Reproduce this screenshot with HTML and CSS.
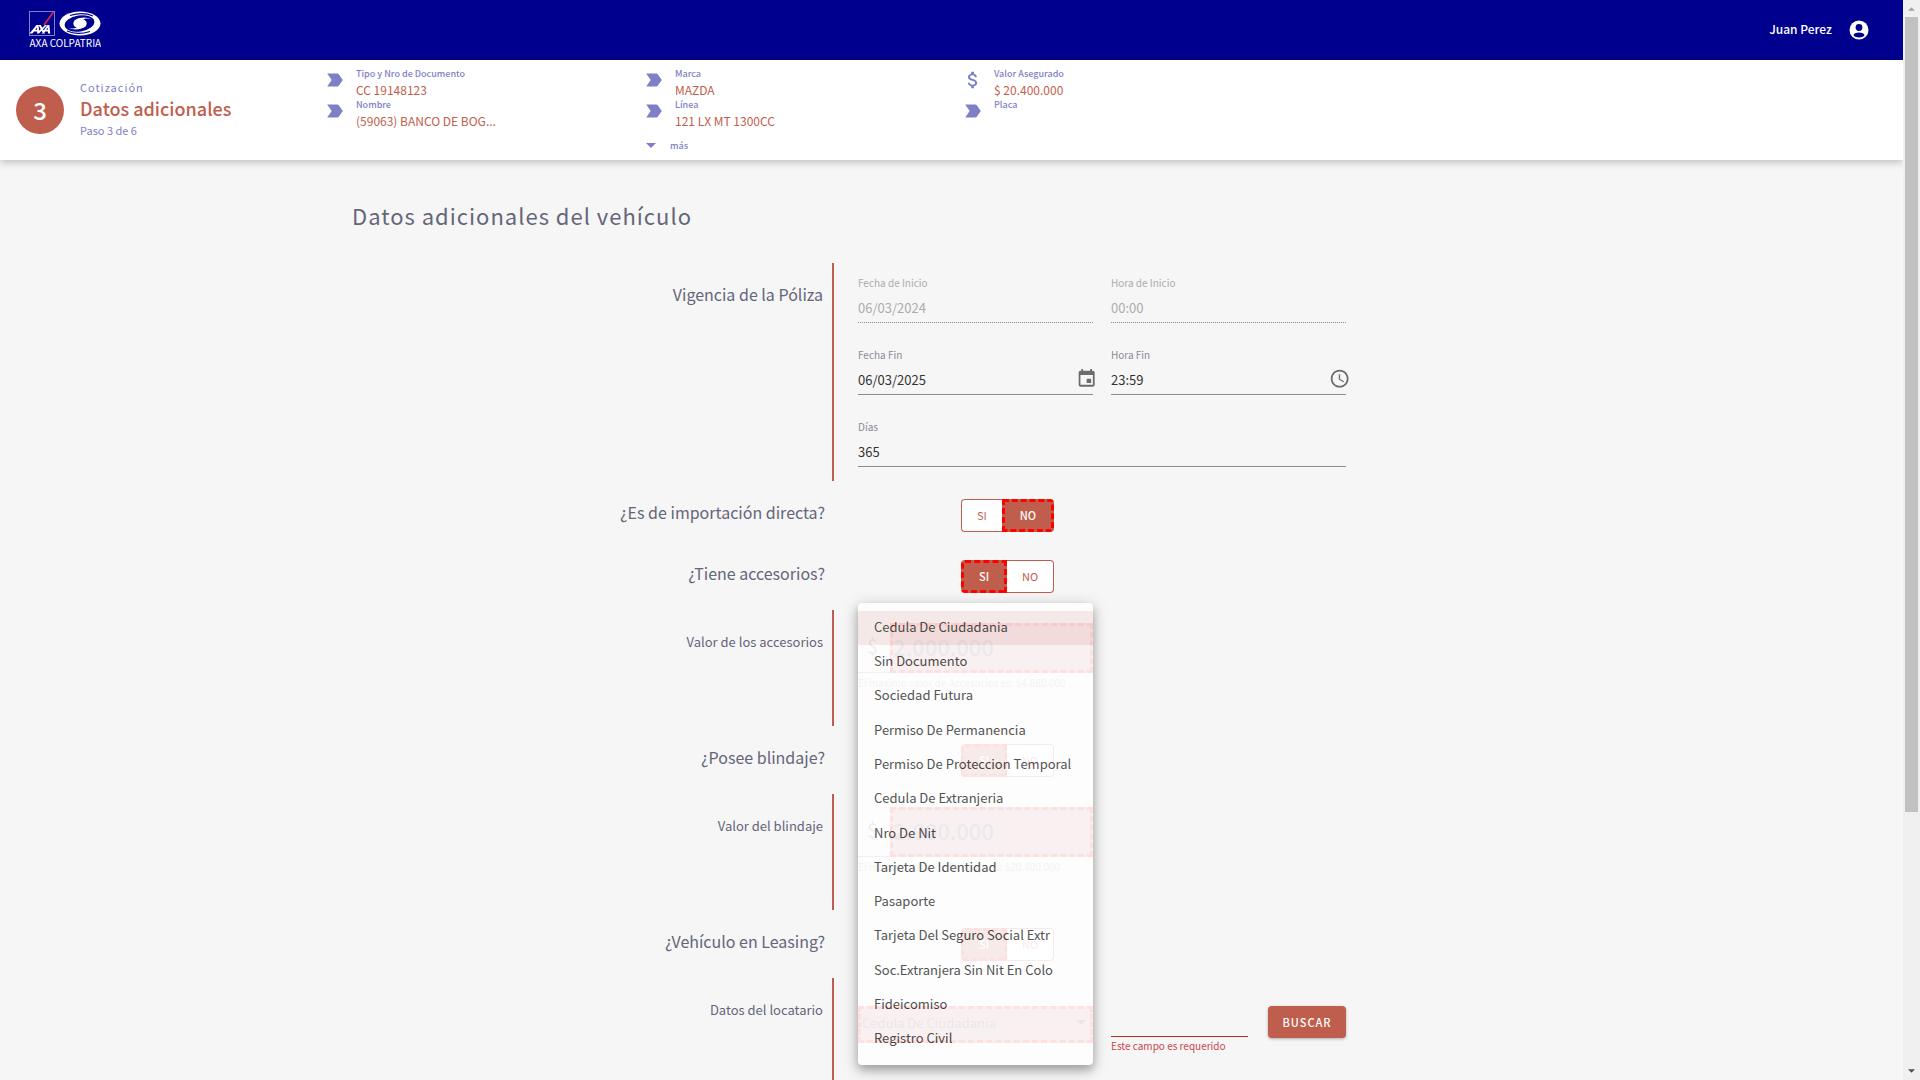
FILE: index.html
```html
<!DOCTYPE html>
<html lang="es">
<head>
<meta charset="utf-8">
<title>Datos adicionales - AXA Colpatria</title>
<link rel="stylesheet" href="styles.css">
</head>
<body>
<svg class="defs" aria-hidden="true">
  <symbol id="tag" viewBox="0 0 24 24"><path d="M3.5 19h11c.67 0 1.27-.33 1.63-.84L20.5 12l-4.37-6.16c-.36-.51-.96-.84-1.63-.84h-11l4.84 7z"/></symbol>
  <symbol id="money" viewBox="0 0 24 24"><path d="M11.8 10.9c-2.27-.59-3-1.2-3-2.15 0-1.09 1.01-1.85 2.7-1.85 1.78 0 2.44.85 2.5 2.1h2.21c-.07-1.72-1.12-3.3-3.21-3.81V3h-3v2.16c-1.94.42-3.5 1.68-3.5 3.61 0 2.31 1.91 3.46 4.7 4.13 2.5.6 3 1.48 3 2.41 0 .69-.49 1.79-2.7 1.79-2.06 0-2.87-.92-2.98-2.1h-2.2c.12 2.19 1.76 3.42 3.68 3.83V21h3v-2.15c1.95-.37 3.5-1.5 3.5-3.55 0-2.84-2.43-3.81-4.7-4.4z"/></symbol>
  <symbol id="caret" viewBox="0 0 10 5"><path d="M0 0h10L5 5z"/></symbol>
</svg>
<div class="shell">
  <div class="page">
    <header class="topbar">
      <a class="logo" href="#" aria-label="AXA Colpatria">
        <svg width="72" height="38" viewBox="0 0 72 38">
          <rect x="0.5" y="0.5" width="25" height="24" fill="none" stroke="#7f7fc7"/>
          <path d="M24.5 1L15 14" stroke="#e0244e" stroke-width="1.6"/>
          <path d="M.5 22.500L7.500 14h2l1 8.500H8.300l-.2-2H5l-1.600 2zM6.300 18.800h1.700l-.2-2.300zM9.500 14h2.300l1.500 2.700 2.700-2.700h2l-3.900 4.300 2.100 4.200h-2.300l-1.300-2.700-2.600 2.700H7.700l4-4.400zM12.500 22.500l6-8.500h1.800l1 8.500h-2.200l-.2-2h-2.700l-1.400 2zM17.300 18.800h1.500l-.2-2.300z" fill="#fff"/>
          <ellipse cx="51" cy="12.500" rx="20.500" ry="12" fill="#fff"/>
          <ellipse cx="50.500" cy="12.500" rx="15" ry="8" fill="#00008f" transform="rotate(-9 50.500 12.500)"/>
          <path d="M41 4.500Q54 .5 64 5" fill="none" stroke="#00008f" stroke-width="1.300"/>
          <path d="M61 20.500Q48 24.500 38 20" fill="none" stroke="#00008f" stroke-width="1.300"/>
          <path d="M45 10Q53 4 64 8.500Q57 6.500 53 9zM57 15Q49 21 38 16.500Q45 18.500 49 16z" fill="#fff"/>
          <ellipse cx="51" cy="12.500" rx="6.700" ry="5" fill="#fff"/>
          <text x="0.5" y="36" class="logo-name">AXA COLPATRIA</text>
        </svg>
      </a>
      <button class="user" type="button"><span>Juan Perez</span>
        <svg width="24" height="24" viewBox="0 0 24 24"><circle cx="12" cy="12" r="9.500" fill="#fff"/><circle cx="12" cy="9.500" r="3.400" fill="#00008f"/><ellipse cx="12" cy="17" rx="5.400" ry="2.500" fill="#00008f"/></svg>
      </button>
    </header>

    <section class="summary">
      <div class="step">
        <span class="step-number">3</span>
        <div>
          <p class="step-over">Cotización</p>
          <h1 class="step-title">Datos adicionales</h1>
          <p class="step-count">Paso 3 de 6</p>
        </div>
      </div>
      <dl class="facts">
        <div class="fact"><svg><use href="#tag"/></svg><dt>Tipo y Nro de Documento</dt><dd>CC 19148123</dd></div>
        <div class="fact"><svg><use href="#tag"/></svg><dt>Nombre</dt><dd>(59063) BANCO DE BOG...</dd></div>
      </dl>
      <div>
        <dl class="facts">
          <div class="fact"><svg><use href="#tag"/></svg><dt>Marca</dt><dd>MAZDA</dd></div>
          <div class="fact"><svg><use href="#tag"/></svg><dt>Línea</dt><dd>121 LX MT 1300CC</dd></div>
        </dl>
        <button class="more" type="button"><svg><use href="#caret"/></svg>más</button>
      </div>
      <dl class="facts">
        <div class="fact"><svg><use href="#money"/></svg><dt>Valor Asegurado</dt><dd>$ 20.400.000</dd></div>
        <div class="fact"><svg><use href="#tag"/></svg><dt>Placa</dt><dd></dd></div>
      </dl>
    </section>

    <main class="content">
      <h2 class="title">Datos adicionales del vehículo</h2>
      <form>
        <div class="row policy">
          <h3 class="row-label ruled">Vigencia de la Póliza</h3>
          <div class="fields">
            <div class="field disabled"><label for="f1">Fecha de Inicio</label><div class="control"><input id="f1" value="06/03/2024" disabled></div></div>
            <div class="field disabled"><label for="h1">Hora de Inicio</label><div class="control"><input id="h1" value="00:00" disabled></div></div>
            <div class="field"><label for="f2">Fecha Fin</label><div class="control"><input id="f2" value="06/03/2025"><button type="button" class="picker" aria-label="Elegir fecha"><svg viewBox="0 0 24 24"><path d="M17 12h-5v5h5v-5zM16 1v2H8V1H6v2H5c-1.110 0-1.990.9-1.990 2L3 19c0 1.100.89 2 2 2h14c1.100 0 2-.9 2-2V5c0-1.100-.9-2-2-2h-1V1h-2zm3 18H5V8h14v11z"/></svg></button></div></div>
            <div class="field"><label for="h2">Hora Fin</label><div class="control"><input id="h2" value="23:59"><button type="button" class="picker" aria-label="Elegir hora"><svg viewBox="0 0 24 24"><path d="M11.990 2C6.470 2 2 6.480 2 12s4.470 10 9.990 10C17.520 22 22 17.520 22 12S17.520 2 11.990 2zM12 20c-4.420 0-8-3.580-8-8s3.580-8 8-8 8 3.580 8 8-3.580 8-8 8zm.5-13H11v6l5.250 3.150.75-1.230-4.500-2.670z"/></svg></button></div></div>
            <div class="field wide"><label for="d">Días</label><div class="control"><input id="d" value="365"></div></div>
          </div>
        </div>

        <div class="row question">
          <h3 class="row-label">¿Es de importación directa?</h3>
          <div class="toggle"><button type="button" aria-pressed="false">SI</button><button type="button" aria-pressed="true">NO</button></div>
        </div>
        <div class="row question">
          <h3 class="row-label">¿Tiene accesorios?</h3>
          <div class="toggle"><button type="button" aria-pressed="true">SI</button><button type="button" aria-pressed="false">NO</button></div>
        </div>
        <div class="row amount">
          <label class="row-label ruled small" for="acc">Valor de los accesorios</label>
          <div class="money">
            <div class="money-box"><span>$</span><input id="acc" value="2.000.000"></div>
            <p class="hint">El maximo valor de Accesorios es: $4.080.000</p>
          </div>
        </div>
        <div class="row question">
          <h3 class="row-label">¿Posee blindaje?</h3>
          <div class="toggle"><button type="button" aria-pressed="true">SI</button><button type="button" aria-pressed="false">NO</button></div>
        </div>
        <div class="row amount">
          <label class="row-label ruled small" for="bli">Valor del blindaje</label>
          <div class="money">
            <div class="money-box"><span>$</span><input id="bli" value="2.000.000"></div>
            <p class="hint">El maximo valor de Blindaje es: $20.400.000</p>
          </div>
        </div>
        <div class="row question">
          <h3 class="row-label">¿Vehículo en Leasing?</h3>
          <div class="toggle"><button type="button" aria-pressed="true">SI</button><button type="button" aria-pressed="false">NO</button></div>
        </div>
        <div class="row lessee">
          <h3 class="row-label ruled small">Datos del locatario</h3>
          <div class="lookup">
            <div class="doc-type">
              <button class="select" type="button" role="combobox" aria-expanded="true" aria-controls="doc-menu" aria-label="Tipo de documento">Cedula De Ciudadania<svg><use href="#caret"/></svg></button>
              <ul class="menu" id="doc-menu" role="listbox">
                <li role="option" aria-selected="true">Cedula De Ciudadania</li>
                <li role="option">Sin Documento</li>
                <li role="option">Sociedad Futura</li>
                <li role="option">Permiso De Permanencia</li>
                <li role="option">Permiso De Proteccion Temporal</li>
                <li role="option">Cedula De Extranjeria</li>
                <li role="option">Nro De Nit</li>
                <li role="option">Tarjeta De Identidad</li>
                <li role="option">Pasaporte</li>
                <li role="option">Tarjeta Del Seguro Social Extr</li>
                <li role="option">Soc.Extranjera Sin Nit En Colo</li>
                <li role="option">Fideicomiso</li>
                <li role="option">Registro Civil</li>
              </ul>
            </div>
            <div class="doc-number"><input aria-label="Número de documento"><p class="error">Este campo es requerido</p></div>
            <button class="search" type="button">BUSCAR</button>
          </div>
        </div>
      </form>
    </main>
  </div>
  <div class="scrollbar" aria-hidden="true">
    <svg class="arrow up"><use href="#caret"/></svg>
    <div class="track"><div class="thumb"></div></div>
    <svg class="arrow"><use href="#caret"/></svg>
  </div>
</div>
</body>
</html>
```

FILE: styles.css
```css
:root {
  --brand: #00008f;
  --accent: #bf5e4d;
  --lilac: #7f7fc7;
  --ink: #65657a;
}

* { box-sizing: border-box; }

body {
  margin: 0;
  background: #f6f6f6;
  font-family: "Noto Sans CJK SC", "Noto Sans", sans-serif;
  font-size: 13px;
  color: #333;
}

h1, h2, h3, p, dl, dd, ul { margin: 0; padding: 0; }
h1, h2, h3 { font-weight: 400; }
button, input { font: inherit; color: inherit; border: 0; padding: 0; background: none; border-radius: 0; outline: 0; }
button { cursor: pointer; }
input { width: 100%; min-width: 0; }
svg { fill: currentColor; flex: none; }
.defs { position: absolute; width: 0; height: 0; }

.shell { display: grid; grid-template-columns: 1fr 17px; height: 100vh; overflow: hidden; }
.page { min-width: 0; overflow: hidden; }

/* Top bar */
.topbar {
  display: flex;
  justify-content: space-between;
  align-items: center;
  height: 60px;
  padding: 0 32px 0 29px;
  background: var(--brand);
  color: #fff;
}
.logo svg { display: block; }
.logo-name { font-size: 10px; fill: #fff; }
.user { display: flex; align-items: center; gap: 15px; font-size: 12px; font-weight: 500; }
.user span { padding-bottom: 4px; }

/* Summary strip */
.summary {
  position: relative;
  display: grid;
  grid-template-columns: 324px repeat(3, 319px);
  height: 100px;
  padding-top: 7px;
  background: #fff;
  box-shadow: 0 2px 8px rgba(0, 0, 0, .25);
}
.step { display: flex; gap: 16px; padding-left: 16px; }
.step-number {
  width: 48px;
  height: 48px;
  margin-top: 19px;
  border-radius: 50%;
  background: var(--accent);
  color: #fff;
  font-size: 24px;
  font-weight: 500;
  line-height: 48px;
  text-align: center;
}
.step-over, .step-count { font-size: 11px; line-height: 16px; color: var(--lilac); }
.step-over { padding-top: 12px; letter-spacing: 1px; }
.step-title { font-size: 18px; line-height: 27px; font-weight: 500; color: var(--accent); }

.fact { display: grid; grid-template-columns: 32px 180px; grid-template-rows: 14px 17px; }
.fact svg { grid-row: 1 / 3; width: 22px; height: 22px; margin-top: 2px; color: var(--lilac); }
.fact dt { font-size: 9px; line-height: 14px; font-weight: 500; color: var(--lilac); }
.fact dd { font-size: 12px; line-height: 17px; color: var(--accent); white-space: nowrap; }
.more { display: flex; align-items: center; gap: 14px; height: 16px; margin-top: 8px; padding-left: 3px; font-size: 9px; font-weight: 500; color: var(--lilac); }
.more svg { width: 10px; height: 5px; }

/* Form */
.content { max-width: 1199px; margin: 0 auto; padding-top: 39px; }
.title { font-size: 22px; line-height: 32px; letter-spacing: 1px; color: var(--ink); margin-bottom: 32px; }
.row { display: grid; grid-template-columns: 482px 488px; column-gap: 24px; }
.row-label { padding: 19px 9px 0 0; font-size: 16px; line-height: 24px; text-align: right; color: var(--ink); }
.row-label.small { padding-top: 20px; font-size: 13px; }
.ruled { border-right: 2px solid var(--accent); }

.fields { display: grid; grid-template-columns: 1fr 1fr; gap: 24px 18px; padding: 13px 0; }
.field.wide { grid-column: 1 / 3; }
.field label { display: block; font-size: 10px; line-height: 14px; margin-bottom: 2px; color: #8a8a96; }
.control { display: flex; align-items: center; height: 31px; border-bottom: 1px solid #8c8c8c; }
.field { height: 48px; }
.disabled label, .disabled input { color: #acacac; }
.disabled .control { border-bottom-style: dotted; }
.picker { width: 23px; height: 23px; margin-right: -4px; color: #6b6b6b; }
.picker svg { display: block; }

.question { height: 61px; }
.toggle { display: flex; height: 33px; margin: 18px 0 0 103px; }
.toggle button { padding: 0 15px 2px; background: #fff; border: 1px solid var(--accent); color: var(--accent); font-size: 11px; line-height: 16px; }
.toggle button:first-child { border-radius: 4px 0 0 4px; }
.toggle button:last-child { border-radius: 0 4px 4px 0; }
.toggle button:first-child[aria-pressed="false"] { border-right: 0; }
.toggle button:last-child[aria-pressed="false"] { border-left: 0; }
.toggle button[aria-pressed="true"] { background: var(--accent); border: 3px dashed #f00; color: #fff; font-weight: 500; }

.amount, .lessee { margin-top: 7px; }
.amount { height: 116px; }
.money { width: 235px; padding-top: 13px; }
.money-box { display: flex; align-items: center; height: 50px; border-bottom: 1px solid #8c8c8c; font-size: 20px; color: #777; }
.money-box span { width: 32px; padding: 0 0 4px 9px; }
.money-box input { flex: 1; height: 50px; padding-bottom: 4px; border: 3px dashed #f00; background: #d48c90; color: #50506e; font-size: 22px; font-weight: 500; }
.hint, .error { font-size: 10px; line-height: 16px; }
.hint { padding-top: 2px; color: #999; white-space: nowrap; }

.lessee { height: 180px; }
.lookup { display: grid; grid-template-columns: 235px 137px 80px; column-gap: 18px; align-items: start; padding-top: 28px; }
.doc-type { position: relative; }
.select { display: flex; justify-content: space-between; align-items: center; width: 100%; height: 37px; padding: 0 4px 4px 1px; border: 3px dashed #f00; background: #d48c90; color: #444; font-size: 13px; }
.select svg { width: 10px; height: 5px; }
.menu {
  position: absolute;
  left: 0;
  bottom: -22px;
  z-index: 2;
  display: flex;
  flex-direction: column;
  width: 100%;
  height: 462px;
  padding: 8px 0;
  border-radius: 4px;
  background: #fff;
  box-shadow: 0 5px 8px rgba(0, 0, 0, .25), 0 4px 16px rgba(0, 0, 0, .25);
  list-style: none;
  opacity: .88;
}
.menu li { flex: 1; display: flex; align-items: center; padding: 0 0 4px 16px; font-size: 13px; white-space: nowrap; color: #3c3c3c; }
.menu li[aria-selected="true"] { background: #f5e8e6; }
.doc-number input { display: block; height: 31px; border-bottom: 1px solid #c62828; }
.error { padding-top: 1px; color: #c9454c; white-space: nowrap; }
.search { height: 32px; margin-left: 2px; border-radius: 4px; background: var(--accent); color: #fff; font-size: 11px; font-weight: 500; letter-spacing: 1px; box-shadow: 0 1px 3px rgba(0, 0, 0, .3); }

/* Scroll bar */
.scrollbar { display: flex; flex-direction: column; align-items: center; background: #f0f0f0; }
.arrow { width: 7px; height: 4px; margin: 6px 0 7px; color: #505050; }
.arrow.up { margin: 7px 0 6px; transform: scaleY(-1); color: #a3a3a3; }
.track { flex: 1; width: 13px; }
.thumb { height: 76%; background: #c1c1c1; }
```
